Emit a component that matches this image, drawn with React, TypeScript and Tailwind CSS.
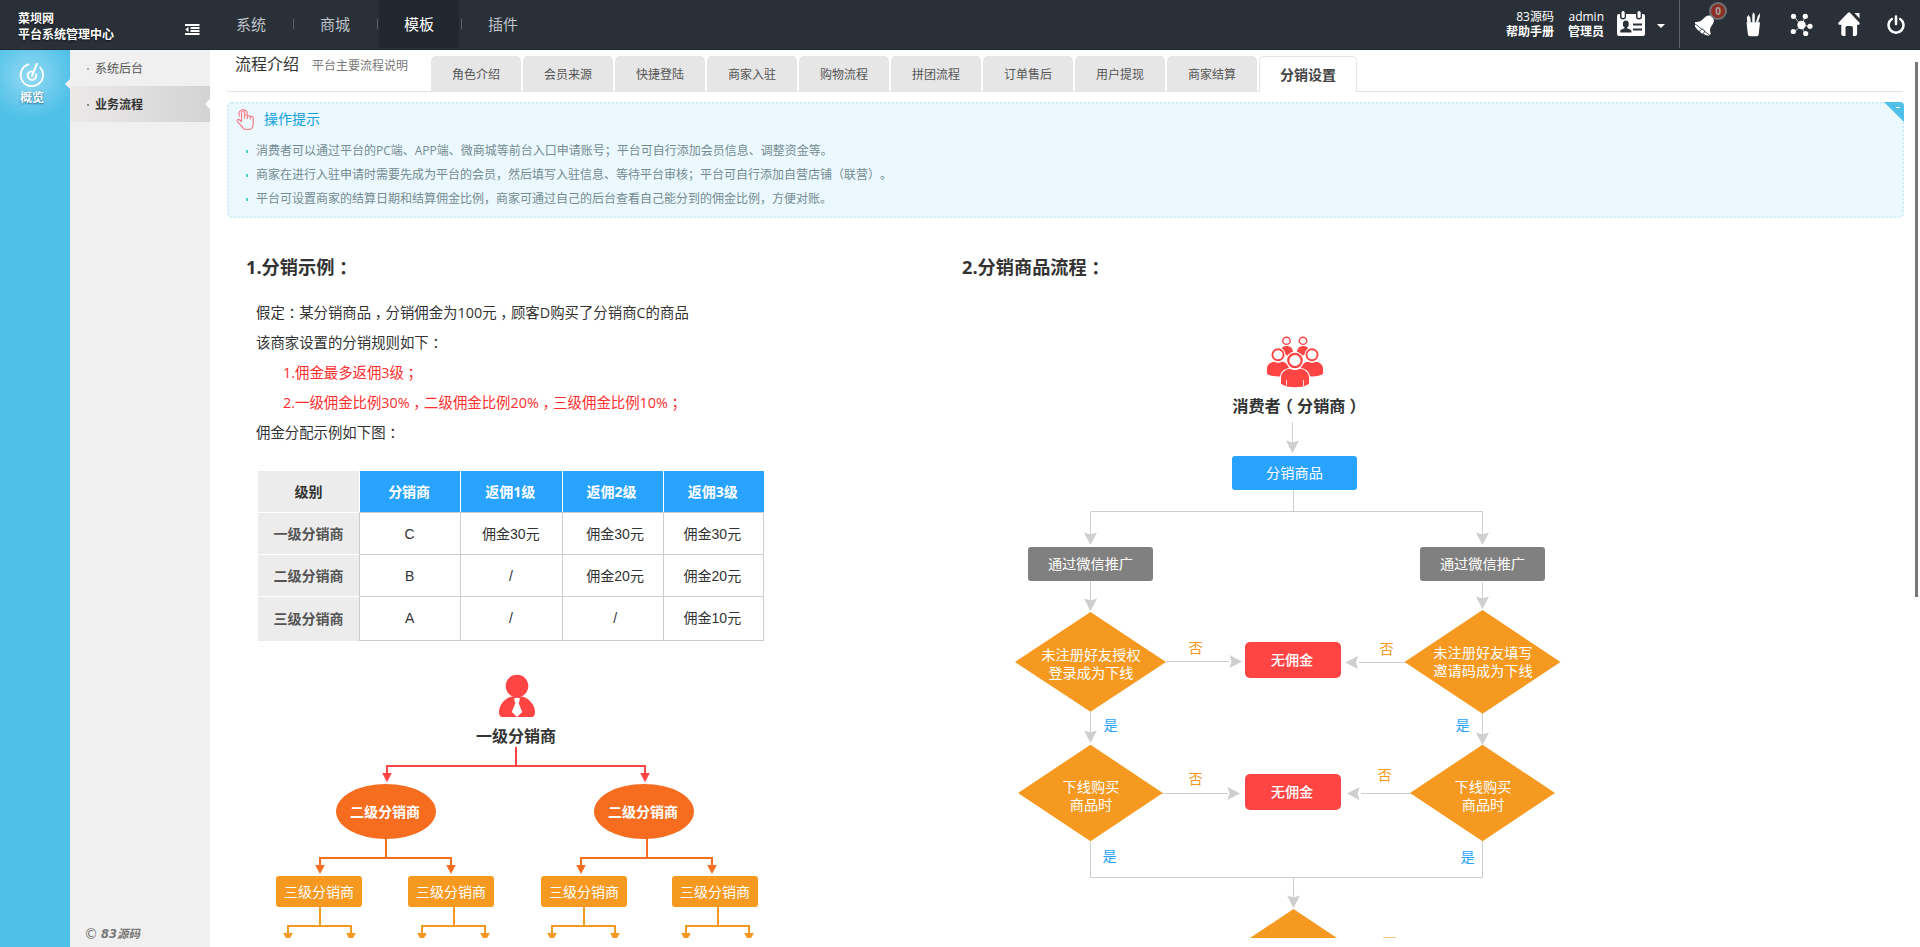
import { Fragment, type ReactNode } from "react";
import clsx from "clsx";

const navItems = ["系统", "商城", "模板", "插件"];

const tabs = ["角色介绍", "会员来源", "快捷登陆", "商家入驻", "购物流程", "拼团流程", "订单售后", "用户提现", "商家结算"];

const tips = [
  "消费者可以通过平台的PC端、APP端、微商城等前台入口申请账号；平台可自行添加会员信息、调整资金等。",
  "商家在进行入驻申请时需要先成为平台的会员，然后填写入驻信息、等待平台审核；平台可自行添加自营店铺（联营）。",
  "平台可设置商家的结算日期和结算佣金比例，商家可通过自己的后台查看自己能分到的佣金比例，方便对账。",
];

const levels = [
  { name: "一级分销商", cells: ["C", "佣金30元", "佣金30元", "佣金30元"] },
  { name: "二级分销商", cells: ["B", "/", "佣金20元", "佣金20元"] },
  { name: "三级分销商", cells: ["A", "/", "/", "佣金10元"] },
];

// Full-width punctuation sits in the middle of its cell
function Cn({ children }: { children: string }) {
  return (
    <>
      {children.split(/([：，；（）])/).map((part, i) =>
        /^[：，；（）]$/.test(part) ? (
          <span key={i} className="px-[0.25em] [font-feature-settings:'halt']">
            {part}
          </span>
        ) : (
          <Fragment key={i}>{part}</Fragment>
        )
      )}
    </>
  );
}

function FoldIcon() {
  return (
    <svg width="15" height="12" viewBox="0 0 15 12" fill="#fff">
      <path d="M0 0h14.500v2H0zM5.500 3h9v2h-9zM5.500 6h9v2h-9zM0 9h14.500v2H0zM3.500 2.700v5.600L.3 5.500z" />
    </svg>
  );
}

function CardIcon() {
  return (
    <svg width="28" height="26" viewBox="0 0 28 26" fill="none">
      <path d="M2 3h1v2.500a3 3 0 0 0 6 0V3h10v2.500a3 3 0 0 0 6 0V3h1a2 2 0 0 1 2 2v18a2 2 0 0 1-2 2H2a2 2 0 0 1-2-2V5a2 2 0 0 1 2-2z" fill="#fff" />
      <rect x="4.500" y="0" width="3.200" height="7" rx="1.600" fill="#fff" />
      <rect x="20.500" y="0" width="3.200" height="7" rx="1.600" fill="#fff" />
      <ellipse cx="8.800" cy="13" rx="3" ry="3.600" fill="#2a3038" />
      <path d="M7.500 15h2.600v2.200l3.600 1.600c.6.4.8 1 .8 2.700H3.200c0-1.700.2-2.300.8-2.700l3.500-1.600z" fill="#2a3038" />
      <path d="M16 13.500h9M16 18.500h9" stroke="#2a3038" strokeWidth="2" />
    </svg>
  );
}

function BellIcon() {
  return (
    <svg width="22" height="24" viewBox="0 0 22 24" fill="#fff">
      <g transform="translate(11.500 10.500) rotate(38)">
        <path d="M0-10.500c-1.200 0-1.900.9-1.900 2C-4.500-7.300-5.300-5-5.500-1c-.2 3-1.500 4.800-4.300 6.700V7H9.800V5.700C7 3.800 5.700 2 5.500-1 5.300-5 4.500-7.300 1.900-8.500c0-1.100-.7-2-1.900-2z" />
        <path d="M-9.800 7.700H9.800C8.500 9.500 4.500 10.600 0 10.600S-8.500 9.500-9.800 7.700z" />
        <circle cx="1.500" cy="9" r="2.300" stroke="#2a3038" strokeWidth=".8" />
      </g>
    </svg>
  );
}

function PencilCupIcon() {
  return (
    <svg width="15" height="25" viewBox="0 0 15 25" fill="#fff">
      <path d="M.5 10.300h13.500L12.700 22.500a2 2 0 0 1-2 1.800H3.900a2 2 0 0 1-2-1.800z" />
      <path d="M1.300 10.500L.8 5.500 2.300 3l2 2.500.6 5zM6.300 10.500V2.500L7.600.2l1.200 2.300v8zM9.800 10.500l1.900-6.300L14 1l-.2 3.800-1.700 5.700z" />
    </svg>
  );
}

function NetworkIcon() {
  return (
    <svg width="24" height="24" viewBox="0 0 24 24" fill="#fff">
      <path d="M4 3.500l7 8.500M15 3.500L12 12M3.500 19.500L12 12M15 21l-4-9M20 13.500L12 12" stroke="#fff" strokeWidth=".7" />
      <circle cx="11.500" cy="12" r="4.200" />
      <circle cx="3.500" cy="3.300" r="2.600" />
      <circle cx="15.300" cy="3.300" r="2.600" />
      <circle cx="3.300" cy="18.500" r="2.600" />
      <circle cx="15.700" cy="20.500" r="2.600" />
      <circle cx="20" cy="13.300" r="2.600" />
    </svg>
  );
}

function HomeIcon() {
  return (
    <svg width="23" height="25" viewBox="0 0 23 25" fill="#fff">
      <path d="M10 .8L.6 10.500c-.8.900-.2 2.200 1 2.200h1.700V22a2 2 0 0 0 2 2h2.200V15.700c0-1 .8-1.700 1.800-1.700h3.800c1 0 1.800.8 1.800 1.700V24h2.200a2 2 0 0 0 2-2v-9.300h1.200c1.200 0 1.900-1.300 1-2.200L12 .8a1.400 1.400 0 0 0-2 0z" />
      <path d="M16.500 1h5v5.500z" />
    </svg>
  );
}

function PowerIcon() {
  return (
    <svg width="18" height="20" viewBox="0 0 18 20" fill="none" stroke="#fff" strokeWidth="2.500" strokeLinecap="round">
      <path d="M4.800 4a7.500 7.500 0 1 0 8.400 0M9 1.500V9" />
    </svg>
  );
}

function Header() {
  return (
    <header className="flex h-[50px] shrink-0 bg-[#2a3038] text-white shadow-[inset_0_-1px_0_#22272e]">
      <div className="flex w-[210px] justify-between pl-[18px] pr-[10px] pt-[11px] [text-shadow:0_1px_2px_rgba(0,0,0,0.6)]">
        <div className="text-xs leading-4 font-bold whitespace-nowrap">
          <p>菜坝网</p>
          <p>平台系统管理中心</p>
        </div>
        <div className="pt-[13px]">
          <FoldIcon />
        </div>
      </div>

      <nav className="ml-px flex h-12">
        {navItems.map((item, i) => (
          <Fragment key={item}>
            {i > 0 && <i className="mx-[1.5px] mt-[19px] h-[10px] w-px bg-[#5a6068]" />}
            <a
              className={clsx(
                "flex w-20 items-center justify-center text-[15px]",
                item === "模板" ? "bg-[#21272f] text-white" : "text-[#bfc3c8]"
              )}
            >
              {item}
            </a>
          </Fragment>
        ))}
      </nav>

      <div className="ml-auto flex h-12 pt-[9px] text-xs leading-[15px] text-right">
        <p className="mr-[14px]">
          83源码
          <br />
          <b>帮助手册</b>
        </p>
        <p>
          admin
          <br />
          <b>管理员</b>
        </p>
        <div className="ml-[13px] mt-[2px]">
          <CardIcon />
        </div>
        <i className="ml-[12px] mt-[15px] h-0 w-0 border-x-4 border-t-4 border-x-transparent border-t-white" />
      </div>

      <div className="ml-[14px] flex h-12 w-[241px] border-l border-[#5c6168]">
        <div className="relative ml-[15px] mt-[13px] w-[22px]">
          <BellIcon />
          <span className="absolute -top-[11px] left-[14px] flex h-[18px] w-[18px] items-center justify-center rounded-full border-2 border-[#6f7378] bg-[#8a2f22] text-[10px] leading-none font-bold text-[#a9a29f]">
            0
          </span>
        </div>
        <div className="ml-[29px] mt-[12px]">
          <PencilCupIcon />
        </div>
        <div className="ml-[29px] mt-[13px]">
          <NetworkIcon />
        </div>
        <div className="ml-[24px] mt-[12px]">
          <HomeIcon />
        </div>
        <div className="ml-[26px] mt-[15px]">
          <PowerIcon />
        </div>
      </div>
    </header>
  );
}

function Sidebar() {
  return (
    <>
      <aside className="relative w-[70px] shrink-0 bg-[#4fc0e8] bg-[radial-gradient(circle_at_30px_26px,#93daf3_0,#4fc0e8_44px)] pt-[12px] text-center text-xs font-bold text-white">
        <svg className="ml-[19px]" width="26" height="27" viewBox="0 0 26 27" fill="none" stroke="#fff" strokeWidth="1.800" strokeLinecap="round">
          <path d="M9.500 2.300a11.200 11.200 0 1 0 11.700 3.200" />
          <path d="M13 9.300a4.300 4.300 0 1 0 4.100 3" />
          <path d="M17.800 2L13 13.800" strokeWidth="2" />
        </svg>
        <p className="mr-[6px] leading-[18px] [text-shadow:0_1px_2px_rgba(0,70,110,0.7)]">概览</p>
        <i className="absolute top-[29px] right-0 border-y-[5px] border-r-[5px] border-y-transparent border-r-[#f0f0f0]" />
      </aside>
      <aside className="flex w-[140px] shrink-0 flex-col bg-[#f0f0f0] text-xs text-[#555]">
        <a className="flex h-9 items-center pt-[2px] pl-[17px]">
          <i className="mr-[6px] h-[2px] w-[2px] bg-[#aaa]" />
          系统后台
        </a>
        <a className="relative flex h-9 items-center bg-linear-to-r from-[#ece9e9] to-[#d3d3d3] pt-[2px] pl-[17px] font-bold text-[#333]">
          <i className="mr-[6px] h-[2px] w-[2px] bg-[#888]" />
          业务流程
          <i className="absolute top-[13px] right-0 border-y-[5px] border-r-[5px] border-y-transparent border-r-white" />
        </a>
        <p className="mt-auto mb-[4px] flex items-center pl-[14px] leading-[18px] font-bold text-[#777] italic">
          <span className="mr-[3px] font-['DejaVu_Sans',sans-serif] text-[14px] font-normal not-italic">©</span>
          <span className="font-['DejaVu_Sans','Noto_Sans_CJK_SC',sans-serif] text-[11.500px]">83源码</span>
        </p>
      </aside>
    </>
  );
}

function TipBox() {
  return (
    <section className="relative mt-[10px] mr-4 h-[116px] shrink-0 rounded-[5px] border-2 border-dotted border-[#cfeef8] bg-[#ebf8fe]">
      <div className="flex h-[30px] items-center pl-[7px] text-sm text-[#0fa0dc]">
        <svg className="mr-[9px]" width="19" height="22" viewBox="0 0 19 22" fill="none" stroke="#f77f8a" strokeWidth="1.200" strokeLinejoin="round" strokeLinecap="round">
          <path d="M3.500 8A4.200 4.200 0 1 1 11.300 6" />
          <path d="M5.500 13V4.500a1.500 1.500 0 0 1 3 0v5.700M8.500 10V8a1.400 1.400 0 0 1 2.900 0v2.500M11.400 10.500V9a1.400 1.400 0 0 1 2.900 0v2M14.300 11v-1.200a1.400 1.400 0 0 1 2.900 0v6.500c0 1.800-1 2.700-1.500 4.400-2.500.9-6 .9-8.300 0C6.300 18.300 3 16 1.500 13.300c-.7-1.400.8-2.400 1.900-1.500L5.500 13.800" />
        </svg>
        操作提示
      </div>
      <ul className="pt-[5px] pl-[17px] text-xs leading-6 text-[#748b91]">
        {tips.map((tip) => (
          <li key={tip} className="flex items-center whitespace-nowrap">
            <i className="mr-[8px] h-[3px] w-[2px] bg-[#4fd0c4]" />
            {tip}
          </li>
        ))}
      </ul>
      <svg className="absolute -top-[2px] -right-[2px]" width="20" height="20" viewBox="0 0 20 20">
        <path d="M0 0h16a4 4 0 0 1 4 4v16z" fill="#4fc0e8" />
        <path d="M12 5.500h4" stroke="#fff" />
      </svg>
    </section>
  );
}

function LevelTable() {
  return (
    <table className="mt-[23px] ml-[12px] w-[506px] table-fixed border-separate border-spacing-0 text-center text-sm text-[#333]">
      <thead>
        <tr className="h-[41px] font-bold text-white">
          <th className="w-[101px] bg-[#ececec] text-[#333]">级别</th>
          {["分销商", "返佣1级", "返佣2级", "返佣3级"].map((name) => (
            <th key={name} className="border-l border-white bg-[#28a3ff] pr-[2px]">
              {name}
            </th>
          ))}
        </tr>
      </thead>
      <tbody>
        {levels.map((level) => (
          <tr key={level.name} className="h-[42px] last:h-[45px]">
            <th className="border-t border-white bg-[#ececec] text-[#555]">{level.name}</th>
            {level.cells.map((cell, i) => (
              <td
                key={i}
                className={clsx(
                  "border-t border-l border-[#ccc] font-['Liberation_Sans','Noto_Sans_CJK_SC',sans-serif]",
                  i === 2 && "pl-[5px]",
                  i === 3 && "border-r pr-[2px]",
                  i < 2 && "pr-[1px]",
                  level.name === "三级分销商" && "border-b pb-[2px]"
                )}
              >
                {cell}
              </td>
            ))}
          </tr>
        ))}
      </tbody>
    </table>
  );
}

function Node({ className, children }: { className: string; children: ReactNode }) {
  return <div className={clsx("absolute flex items-center justify-center text-center whitespace-nowrap", className)}>{children}</div>;
}

function LevelTree() {
  return (
    <div className="relative mt-[19px] ml-[12px] h-[278px] w-[507px] overflow-hidden">
      <svg className="absolute inset-0" width="507" height="278" viewBox="258 660 507 278" fill="none" strokeWidth="2">
        <circle cx="517" cy="686" r="11.300" fill="#ff4544" />
        <path d="M512 696.500h10c7 1.500 13 8.500 13 15.500 0 3-1 5-3.500 5h-29c-2.500 0-3.500-2-3.500-5 0-7 6-14 13-15.500z" fill="#ff4544" />
        <path d="M514 698.500q3-1.500 6 0l-.8 3.500-.6 1 3.600 9-5.200 5-5.200-5 3.600-9-.6-1z" fill="#fff" />

        <path d="M516 747v19M387 774v-8h258v8" stroke="#ff4544" />
        <path d="M382.200 773h9.600l-4.800 9.300zM640.200 773h9.600l-4.800 9.300z" fill="#ff4544" />

        <path d="M386 838v20M320 866v-8h131v8M647 838v20M581 866v-8h131v8" stroke="#f76d20" />
        <path d="M315.200 865h9.600l-4.800 9zM446.200 865h9.600l-4.800 9zM576.200 865h9.600l-4.800 9zM707.200 865h9.600l-4.800 9z" fill="#f76d20" />
        <ellipse cx="386" cy="811.500" rx="50" ry="27.500" fill="#f76d20" />
        <ellipse cx="644" cy="811.500" rx="50" ry="27.500" fill="#f76d20" />

        <path
          d="M320 906v20M288 934v-8h63v8M454 906v20M422 934v-8h63v8M584 906v20M552 934v-8h63v8M718 906v20M686 934v-8h63v8"
          stroke="#f69920"
        />
        <path
          d="M283.200 933h9.600l-4.800 9zM346.200 933h9.600l-4.800 9zM417.200 933h9.600l-4.800 9zM480.200 933h9.600l-4.800 9zM547.200 933h9.600l-4.800 9zM610.200 933h9.600l-4.800 9zM681.200 933h9.600l-4.800 9zM744.200 933h9.600l-4.800 9z"
          fill="#f69920"
        />
      </svg>
      <Node className="top-[64px] left-[208px] h-6 w-[100px] text-base font-bold text-[#333]">一级分销商</Node>
      <Node className="top-[124px] left-[77px] h-[55px] w-[100px] text-sm font-bold text-white">二级分销商</Node>
      <Node className="top-[124px] left-[335px] h-[55px] w-[100px] text-sm font-bold text-white">二级分销商</Node>
      <Node className="top-[216px] left-[18px] h-[31px] w-[86px] rounded-[3px] bg-[#f69920] text-sm text-white">三级分销商</Node>
      <Node className="top-[216px] left-[150px] h-[31px] w-[86px] rounded-[3px] bg-[#f69920] text-sm text-white">三级分销商</Node>
      <Node className="top-[216px] left-[283px] h-[31px] w-[86px] rounded-[3px] bg-[#f69920] text-sm text-white">三级分销商</Node>
      <Node className="top-[216px] left-[414px] h-[31px] w-[86px] rounded-[3px] bg-[#f69920] text-sm text-white">三级分销商</Node>
    </div>
  );
}

function PeopleIcon() {
  const body = "M-5 0C-9 .5-14 3-14 9v6c3 2.500 8 3.500 14 3.500s11-1 14-3.500V9c0-6-5-8.500-9-9q-5 2.500-10 0z";
  return (
    <g>
      <g fill="#ff4544">
        <path d="M1281 352c0-4 2-6 5.500-6s6.500 2 6.500 6l-5 4zM1309 352c0-4-2-6-5.500-6s-6.500 2-6.500 6l5 4z" />
        <path d={body} transform="translate(1278 361.800) scale(.79)" />
        <path d={body} transform="translate(1312 361.800) scale(.79)" />
      </g>
      <g fill="#fff" stroke="#ff4544" strokeWidth="1.400">
        <ellipse cx="1286.500" cy="340.800" rx="3.700" ry="3.600" />
        <ellipse cx="1303" cy="340.800" rx="3.700" ry="3.600" />
      </g>
      <circle cx="1278" cy="354.700" r="7.500" fill="#fff" />
      <circle cx="1312" cy="354.700" r="7.500" fill="#fff" />
      <g fill="#fff" stroke="#ff4544" strokeWidth="1.900">
        <ellipse cx="1278" cy="354.700" rx="5.600" ry="5.500" />
        <ellipse cx="1312" cy="354.700" rx="5.600" ry="5.500" />
      </g>
      <path d={body} transform="translate(1295 368.700)" fill="#ff4544" stroke="#fff" strokeWidth="2" paintOrder="stroke" />
      <circle cx="1295" cy="360.500" r="9" fill="#fff" />
      <ellipse cx="1295" cy="360.500" rx="6.700" ry="6.600" fill="#fff" stroke="#ff4544" strokeWidth="2.300" />
      <path d="M1286.500 380v6M1303.500 380v6" stroke="#fff" strokeWidth=".8" />
    </g>
  );
}

// Notched arrow head, tip at x/y, pointing down before rotation
function Head({ x, y, turn = 0 }: { x: number; y: number; turn?: number }) {
  return <path d="M0 0L-6.500-12.500 0-10.500 6.500-12.500z" fill="#cecece" transform={`translate(${x} ${y}) rotate(${turn})`} />;
}

function GoodsFlow() {
  return (
    <div className="relative mt-[50px] ml-[38px] h-[608px] w-[580px] overflow-hidden text-[14.2px] text-white">
      <svg className="absolute inset-0" width="580" height="608" viewBox="1000 330 580 608" fill="none">
        <PeopleIcon />
        <g stroke="#cecece">
          <path d="M1292.500 422v22M1293.500 490v21.500M1090.500 535v-23.500h392V535" />
          <path d="M1090.500 580v22M1482.500 582v18M1166 661.500h63M1411 662.500h-52" />
          <path d="M1090.500 711v23M1482.500 713v23M1162 793.500h66M1411 793.500h-50" />
          <path d="M1090.500 842v35.500h392V841M1293.500 877.500v20" />
        </g>
        <Head x={1292.5} y={453} />
        <Head x={1090.5} y={545} />
        <Head x={1482.5} y={545} />
        <Head x={1090.5} y={611} />
        <Head x={1482.5} y={609} />
        <Head x={1242} y={661.5} turn={-90} />
        <Head x={1345.5} y={662.5} turn={90} />
        <Head x={1090.5} y={743} />
        <Head x={1482.5} y={745} />
        <Head x={1240} y={793.5} turn={-90} />
        <Head x={1347} y={793.5} turn={90} />
        <Head x={1293.5} y={908} />
        <g fill="#f69920">
          <path d="M1090.500 612l75.500 50-75.500 49.800L1015 662z" />
          <path d="M1482.500 610l78 52-78 51.800-78-51.800z" />
          <path d="M1090.500 744.700l72.300 48.300-72.300 48.200-72.500-48.200z" />
          <path d="M1482.500 744.700l72.500 48.300-72.500 48.200-72.500-48.200z" />
          <path d="M1293.500 909l72 48h-144z" />
          <path d="M1383 937h13v1h-13z" opacity=".55" />
        </g>
      </svg>
      <Node className="top-[64px] left-[230px] h-6 w-[134px] text-[16.200px] font-bold text-[#333]">
        <span>
          <Cn>消费者（分销商）</Cn>
        </span>
      </Node>
      <Node className="top-[126px] left-[232px] h-[34px] w-[125px] rounded-[3px] bg-[#28a3ff]">分销商品</Node>
      <Node className="top-[217px] left-[28px] h-[34px] w-[125px] rounded-[3px] bg-[#808080]">通过微信推广</Node>
      <Node className="top-[217px] left-[420px] h-[34px] w-[125px] rounded-[3px] bg-[#808080]">通过微信推广</Node>

      <Node className="top-[316px] left-[31px] h-9 w-[120px] leading-[18px]">
        未注册好友授权
        <br />
        登录成为下线
      </Node>
      <Node className="top-[314px] left-[423px] h-9 w-[120px] leading-[18px]">
        未注册好友填写
        <br />
        邀请码成为下线
      </Node>
      <Node className="top-[312px] left-[245px] h-9 w-[96px] rounded-[5px] bg-[#ff4544] pr-[2px] font-medium">无佣金</Node>
      <Node className="top-[309px] left-[188px] h-[18px] w-[15px] text-[#f69920]">否</Node>
      <Node className="top-[310px] left-[379px] h-[18px] w-[15px] text-[#f69920]">否</Node>
      <Node className="top-[386px] left-[103px] h-[18px] w-[15px] text-[#28a3ff]">是</Node>
      <Node className="top-[386px] left-[455px] h-[18px] w-[15px] text-[#28a3ff]">是</Node>

      <Node className="top-[448px] left-[31px] h-9 w-[120px] leading-[18px]">
        下线购买
        <br />
        商品时
      </Node>
      <Node className="top-[448px] left-[423px] h-9 w-[120px] leading-[18px]">
        下线购买
        <br />
        商品时
      </Node>
      <Node className="top-[444px] left-[245px] h-9 w-[96px] rounded-[5px] bg-[#ff4544] pr-[2px] font-medium">无佣金</Node>
      <Node className="top-[440px] left-[188px] h-[18px] w-[15px] text-[#f69920]">否</Node>
      <Node className="top-[436px] left-[377px] h-[18px] w-[15px] text-[#f69920]">否</Node>
      <Node className="top-[517px] left-[102px] h-[18px] w-[15px] text-[#28a3ff]">是</Node>
      <Node className="top-[518px] left-[460px] h-[18px] w-[15px] text-[#28a3ff]">是</Node>
    </div>
  );
}

export default function App() {
  return (
    <div className="flex h-[947px] w-[1920px] flex-col overflow-hidden bg-white font-['Open_Sans','Noto_Sans_CJK_SC',sans-serif] [text-spacing-trim:space-all]">
      <Header />
      <div className="flex min-h-0 flex-1">
        <Sidebar />
        <main className="flex min-w-0 flex-1 flex-col pl-[17px]">
          <div className="mr-[17px] flex h-[42px] shrink-0 items-end border-b border-[#e4e4e4]">
            <h1 className="ml-2 self-start text-base leading-7 text-[#333]">流程介绍</h1>
            <span className="ml-[13px] w-[119px] self-start text-xs leading-8 text-[#777]">平台主要流程说明</span>
            <div className="-mb-px flex gap-[2px]">
              {tabs.map((tab) => (
                <a key={tab} className="flex h-9 w-[90px] items-center justify-center rounded-t-[5px] bg-[#e6e6e6] pt-[2px] text-xs text-[#555]">
                  {tab}
                </a>
              ))}
              <a className="flex h-9 w-[98px] items-center justify-center rounded-t-[5px] border border-b-0 border-[#e4e4e4] bg-white text-sm font-bold text-[#444]">
                分销设置
              </a>
            </div>
          </div>

          <TipBox />

          <div className="flex h-[720px] shrink-0 overflow-hidden pt-[36px] pl-[19px]">
            <section className="w-[716px]">
              <h2 className="text-[18.200px] leading-[26px] font-bold text-[#333]">
                <Cn>1.分销示例：</Cn>
              </h2>
              <div className="mt-[18px] pl-[10px] text-[14.4px] leading-[30px] text-[#333]">
                <p>
                  <Cn>假定：某分销商品，分销佣金为100元，顾客D购买了分销商C的商品</Cn>
                </p>
                <p>
                  <Cn>该商家设置的分销规则如下：</Cn>
                </p>
                <p className="pl-[27px] text-[#ff2e2e]">
                  <Cn>1.佣金最多返佣3级；</Cn>
                </p>
                <p className="pl-[27px] text-[#ff2e2e]">
                  <Cn>2.一级佣金比例30%，二级佣金比例20%，三级佣金比例10%；</Cn>
                </p>
                <p>
                  <Cn>佣金分配示例如下图：</Cn>
                </p>
              </div>
              <LevelTable />
              <LevelTree />
            </section>
            <section>
              <h2 className="text-[18.200px] leading-[26px] font-bold text-[#333]">
                <Cn>2.分销商品流程：</Cn>
              </h2>
              <GoodsFlow />
            </section>
          </div>
        </main>
        <i className="-ml-[5px] mr-[2px] mt-[12px] h-[535px] w-[3px] bg-[#777]" />
      </div>
    </div>
  );
}
